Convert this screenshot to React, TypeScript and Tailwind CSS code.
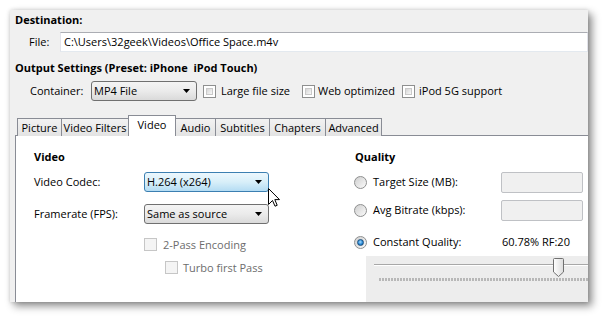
import React from 'react';

const Check = ({ disabled }: { disabled?: boolean }) => (
  <span
    className={`w-[13px] h-[13px] flex shrink-0 p-[2px] border ${
      disabled ? 'border-[#c6c6c6] bg-[#f4f4f4]' : 'border-[#8e8f8f] bg-white'
    }`}
  >
    <span
      className={`flex-1 ${
        disabled ? 'bg-[#f4f4f4]' : 'bg-linear-to-br from-[#d6d6d6] to-[#f8f8f8] border border-[#c9c9c9]'
      }`}
    />
  </span>
);

const Radio = ({ checked }: { checked?: boolean }) => (
  <span className="w-[13px] h-[13px] shrink-0 rounded-full border border-[#8e8f8f] bg-linear-to-br from-[#cfcfcf] to-[#fbfbfb] flex items-center justify-center">
    {checked && (
      <span className="w-[7px] h-[7px] rounded-full border border-[#1b4f7e] bg-[radial-gradient(circle_at_45%_40%,#a8dcff,#2a8ad6_55%,#0f5596)]" />
    )}
  </span>
);

const Arrow = () => (
  <svg width="7" height="4" viewBox="0 0 7 4" className="shrink-0">
    <path d="M0 0h7L3.5 4z" fill="#000" />
  </svg>
);

const Combo = ({ text, active, w }: { text: string; active?: boolean; w: string }) => (
  <div
    className={`${w} h-[20px] shrink-0 rounded-[3px] border flex items-center justify-between pl-[2px] pr-[6px] ${
      active
        ? 'border-[#3c7fb1] bg-linear-to-b from-[#ecf7fd] via-[#d8eff9] to-[#b4dcf3]'
        : 'border-[#707070] bg-linear-to-b from-[#f4f4f4] via-[#ebebeb] to-[#dadada]'
    }`}
  >
    <span>{text}</span>
    <Arrow />
  </div>
);

const tabs = [
  { label: 'Picture', w: 'w-[45px]' },
  { label: 'Video Filters', w: 'w-[68px]' },
  { label: 'Video', w: 'w-[48px]', active: true },
  { label: 'Audio', w: 'w-[41px]' },
  { label: 'Subtitles', w: 'w-[55px]' },
  { label: 'Chapters', w: 'w-[57px]' },
  { label: 'Advanced', w: 'w-[57px]' },
];

export default function App() {
  return (
    <div className="relative w-[606px] h-[320px] bg-white text-[11px] text-black font-['Open_Sans',sans-serif] leading-[14px]">
      <div className="absolute left-[10px] top-[10px] w-[578px] h-[292px] bg-[#f0f0f0] shadow-[4px_4px_8px_rgba(0,0,0,0.45),0_0_4px_rgba(0,0,0,0.15)]">
        <div className="w-full h-full overflow-hidden flex flex-col pl-[5px] pt-[3px]">
          <div className="h-[14px] font-bold">Destination:</div>

          <div className="mt-[5px] h-[20px] flex items-center">
            <span className="pl-[14px] w-[45px]">File:</span>
            <div className="flex-1 h-[20px] bg-white border border-[#e2e3ea] border-t-[#abadb3] border-b-[#e3e9ef] flex items-center pl-[3px] whitespace-nowrap">
              C:\Users\32geek\Videos\Office Space.m4v
            </div>
          </div>

          <div className="mt-[9px] h-[14px] font-bold">Output Settings (Preset: iPhone &nbsp;iPod Touch)</div>

          <div className="mt-[6px] h-[20px] flex items-center">
            <span className="pl-[15px] w-[76px]">Container:</span>
            <Combo text="MP4 File" w="w-[106px]" />
            <div className="ml-[6px] flex items-center gap-[5px] w-[99px]">
              <Check />
              <span>Large file size</span>
            </div>
            <div className="flex items-center gap-[3px] w-[100px]">
              <Check />
              <span>Web optimized</span>
            </div>
            <div className="flex items-center gap-[4px]">
              <Check />
              <span>iPod 5G support</span>
            </div>
          </div>

          <div className="mt-[14px] h-[21px] flex items-end pl-[2px] relative z-10">
            {tabs.map((t) =>
              t.active ? (
                <div
                  key={t.label}
                  className={`${t.w} h-[21px] -ml-px bg-white border border-b-0 border-[#898c95] flex justify-center pt-[2px]`}
                >
                  {t.label}
                </div>
              ) : (
                <div
                  key={t.label}
                  className={`${t.w} h-[18px] -ml-px bg-linear-to-b from-[#f2f2f2] to-[#e3e3e3] border border-b-0 border-[#898c95] flex justify-center items-center whitespace-nowrap first:ml-0`}
                >
                  {t.label}
                </div>
              )
            )}
          </div>

          <div className="-mt-px flex-1 bg-white border-l border-t border-[#898c95] flex">
            <div className="w-[338px] shrink-0 pl-[18px] pt-[14px] flex flex-col">
              <div className="h-[14px] font-bold">Video</div>
              <div className="mt-[8px] h-[20px] flex items-center">
                <span className="w-[110px]">Video Codec:</span>
                <Combo text="H.264 (x264)" active w="w-[125px]" />
              </div>
              <div className="mt-[12px] h-[20px] flex items-center">
                <span className="w-[110px]">Framerate (FPS):</span>
                <Combo text="Same as source" w="w-[125px]" />
              </div>
              <div className="mt-[14px] h-[13px] flex items-center gap-[6px] pl-[110px] text-[#6d6d6d]">
                <Check disabled />
                <span>2-Pass Encoding</span>
              </div>
              <div className="mt-[10px] h-[13px] flex items-center gap-[5px] pl-[131px] text-[#6d6d6d]">
                <Check disabled />
                <span>Turbo first Pass</span>
              </div>
            </div>

            <div className="flex-1 pt-[14px] flex flex-col">
              <div className="h-[14px] font-bold pl-[1px]">Quality</div>
              <div className="mt-[8px] h-[20px] flex items-center">
                <Radio />
                <span className="ml-[6px] w-[128px]">Target Size (MB):</span>
                <div className="w-[82px] h-[21px] rounded-[2px] border border-[#bfc1c5] bg-[#f0f0f0]" />
              </div>
              <div className="mt-[8px] h-[20px] flex items-center">
                <Radio />
                <span className="ml-[6px] w-[128px]">Avg Bitrate (kbps):</span>
                <div className="w-[82px] h-[21px] rounded-[2px] border border-[#bfc1c5] bg-[#f0f0f0]" />
              </div>
              <div className="mt-[12px] h-[20px] flex items-center">
                <Radio checked />
                <span className="ml-[6px] w-[129px]">Constant Quality:</span>
                <span>60.78% RF:20</span>
              </div>
              <div className="mt-[4px] ml-[12px] flex-1 bg-[#ededed] relative">
                <div className="absolute left-[8px] right-0 top-[8px] h-[2px] border-t border-[#a8a8a8] border-b border-b-[#ffffff]" />
                <div className="absolute left-[13px] right-0 top-[22px] h-[3px] bg-[repeating-linear-gradient(90deg,#b8b8b8_0,#b8b8b8_2px,transparent_2px,transparent_3px)]" />
                <svg className="absolute left-[187px] top-[2px]" width="11" height="19" viewBox="0 0 11 19">
                  <defs>
                    <linearGradient id="th" x1="0" y1="0" x2="1" y2="0">
                      <stop offset="0" stopColor="#ffffff" />
                      <stop offset="1" stopColor="#dcdcdc" />
                    </linearGradient>
                  </defs>
                  <path d="M1.5 0.5h8a1 1 0 0 1 1 1V14L5.5 18.5L0.5 14V1.5a1 1 0 0 1 1-1z" fill="url(#th)" stroke="#707070" />
                </svg>
              </div>
            </div>
          </div>
        </div>
      </div>

      <svg className="absolute left-[268px] top-[188px]" width="12" height="19" viewBox="0 0 12 19">
        <path d="M0.5 0.5V16.5L4.5 12.5L7 18.2L9.2 17.3L6.8 11.6H11.5Z" fill="#fff" stroke="#000" strokeLinejoin="round" />
      </svg>
    </div>
  );
}
